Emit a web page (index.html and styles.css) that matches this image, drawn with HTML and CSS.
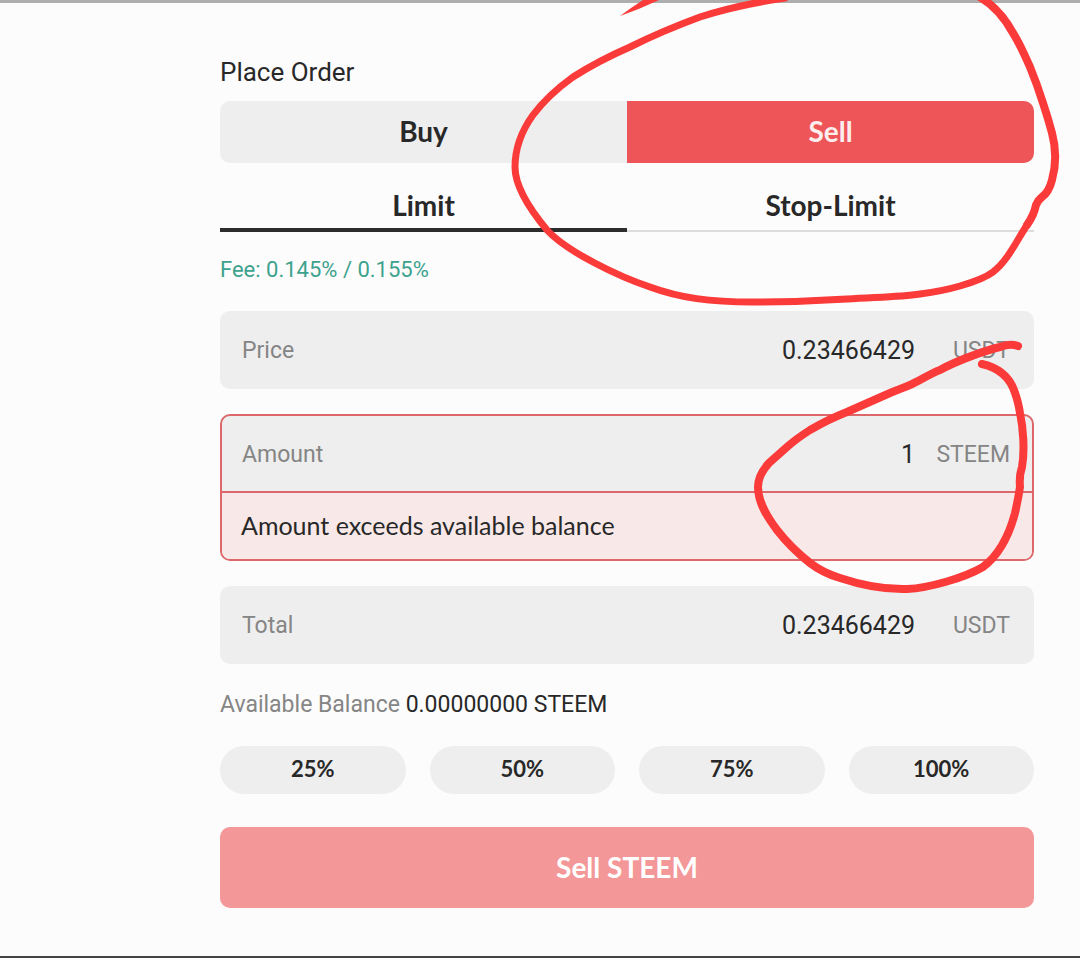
FILE: index.html
```html
<!DOCTYPE html>
<html lang="en">
<head>
	<meta charset="UTF-8">
	<meta name="viewport" content="width=device-width, initial-scale=1">
	<title>Place Order</title>
	<link rel="stylesheet" href="styles.css">
</head>
<body>
	<main class="panel">
		<h1 class="title">Place Order</h1>

		<div class="sides">
			<button type="button" class="side">Buy</button>
			<button type="button" class="side side-sell">Sell</button>
		</div>

		<div class="tabs">
			<button type="button" class="tab tab-active">Limit</button>
			<button type="button" class="tab">Stop-Limit</button>
		</div>

		<p class="fee">Fee: 0.145% / 0.155%</p>

		<form class="order">
			<div class="field">
				<div class="row">
					<label for="price">Price</label>
					<input id="price" type="text" value="0.23466429">
					<span class="unit">USDT</span>
				</div>
			</div>

			<div class="field field-error">
				<div class="row">
					<label for="amount">Amount</label>
					<input id="amount" type="text" value="1" aria-describedby="amount-error">
					<span class="unit">STEEM</span>
				</div>
				<p class="error" id="amount-error">Amount exceeds available balance</p>
			</div>

			<div class="field">
				<div class="row">
					<label for="total">Total</label>
					<input id="total" type="text" value="0.23466429">
					<span class="unit">USDT</span>
				</div>
			</div>

			<p class="balance">Available Balance <span class="balance-value">0.00000000 STEEM</span></p>

			<div class="percents">
				<button type="button" class="percent">25%</button>
				<button type="button" class="percent">50%</button>
				<button type="button" class="percent">75%</button>
				<button type="button" class="percent">100%</button>
			</div>

			<button type="submit" class="submit" disabled>Sell STEEM</button>
		</form>
	</main>

	<!-- hand-drawn marks around the Sell side and the amount -->
	<svg class="marks" width="1080" height="620" viewBox="0 0 1080 620" aria-hidden="true">
		<path class="tip" d="M620 16 Q632 7 643 0 H659 Q640 9 620 16Z"/>
		<path class="pen pen-thin" d="M785 -2 Q737 5 700 17 Q662 31 630 47 Q598 61 573 77 Q548 95 533 115 Q515 140 515 167 C515 188 532 212 547 230 C567 252 620 277 650 287 C680 298 710 302 753 302 C790 302 815 301 847 299 C880 297 900 297 920 294 Q943 291 960 286 Q984 279 993 272 C1008 260 1016 242 1027 225"/>
		<path class="pen" d="M1027 225 Q1034 215 1036 205 Q1038 200 1042 197 Q1049 192 1052 180 C1057 162 1056 148 1052 133 Q1048 118 1043 103 Q1037 84 1030 67 C1024 54 1020 44 1013 33 Q1000 9 980 -3"/>
		<path class="pen" d="M1018 346 Q1010 343 1000 347 C987 350 958 360 940 370 C929 374 920 381 910 385 C903 388 897 390 890 393 L847 412 Q829 419 810 430 Q796 439 787 447 L769 463 Q758 475 758 487 C758 501 765 514 777 530 Q791 548 810 563 Q823 573 840 578 Q876 590 907 589 C929 588 964 578 983 567 C1000 554 1010 532 1015 513 Q1018 500 1020 487 Q1019 476 1022 467 C1025 450 1023 427 1020 413 Q1018 401 1015 393 Q1008 370 982 364"/>
	</svg>
</body>
</html>
```

FILE: styles.css
```css
* {
	box-sizing: border-box;
}
body {
	margin: 0;
	position: relative;
	background: #fcfcfc;
	color: #282828;
	font-family: Roboto, sans-serif;
	font-size: 25px;
	line-height: 32px;
}
button, input {
	margin: 0;
	padding: 0;
	border: 0;
	background: none;
	color: inherit;
	font: inherit;
}
h1, p {
	margin: 0;
	font-weight: 400;
}
.panel {
	padding: 53px 46px 48px 220px;
	border-top: 3px solid #aeaeae;
	border-bottom: 2px solid #444;
}
.title {
	font-size: 26px;
}

.sides {
	display: flex;
	margin-top: 13px;
	border-radius: 10px;
	overflow: hidden;
	background: #eee;
}
.side, .tab, .submit {
	flex: 1;
	font-family: Lato, sans-serif;
	font-size: 28px;
	font-weight: 700;
}
.side {
	height: 62px;
	padding-bottom: 2px;
}
.side-sell {
	background: #ee5558;
	color: #fdeeee;
}

.tabs {
	display: flex;
	margin-top: 17px;
}
.tab {
	height: 52px;
	border-bottom: 2px solid #ddd;
}
.tab-active {
	padding-top: 2px;
	border-bottom: 4px solid #2c2c2c;
}

.fee {
	margin-top: 22px;
	color: #3da28d;
	font-size: 22px;
}

.order {
	display: flex;
	flex-direction: column;
	gap: 25px;
	margin-top: 25px;
}
.field {
	border-radius: 10px;
	background: #eee;
	overflow: hidden;
}
.row {
	display: flex;
	align-items: center;
	height: 78px;
	padding: 2px 24px 0 22px;
}
.row label, .unit {
	color: #858585;
	font-size: 23px;
}
.row input {
	flex: 1;
	min-width: 0;
	text-align: right;
}
.unit {
	min-width: 95px;
	text-align: right;
}
.field-error {
	border: 2px solid #dc686c;
}
.field-error .row {
	height: 75px;
	padding: 2px 22px 0 20px;
}
.error {
	padding: 16px 19px 18px;
	border-top: 2px solid #dc686c;
	background: #f8e9e8;
	font-family: Lato, sans-serif;
	font-size: 25px;
}

.balance {
	color: #858585;
	font-size: 23px;
}
.balance-value {
	color: #282828;
}

.percents {
	display: flex;
	gap: 24px;
}
.percent {
	flex: 1;
	height: 48px;
	padding-bottom: 2px;
	border-radius: 24px;
	background: #eee;
	font-family: Lato, sans-serif;
	font-size: 22px;
	font-weight: 700;
}

.submit {
	flex: none;
	height: 81px;
	margin-top: 8px;
	padding-bottom: 2px;
	border-radius: 10px;
	background: #f39798;
	color: #fff;
}

.marks {
	position: absolute;
	top: 0;
	left: 0;
	pointer-events: none;
}
.pen {
	fill: none;
	stroke: #fb3a3a;
	stroke-width: 8;
	stroke-linecap: round;
	stroke-linejoin: round;
}
.pen-thin {
	stroke-width: 7;
}
.tip {
	fill: #fb3a3a;
}
```
